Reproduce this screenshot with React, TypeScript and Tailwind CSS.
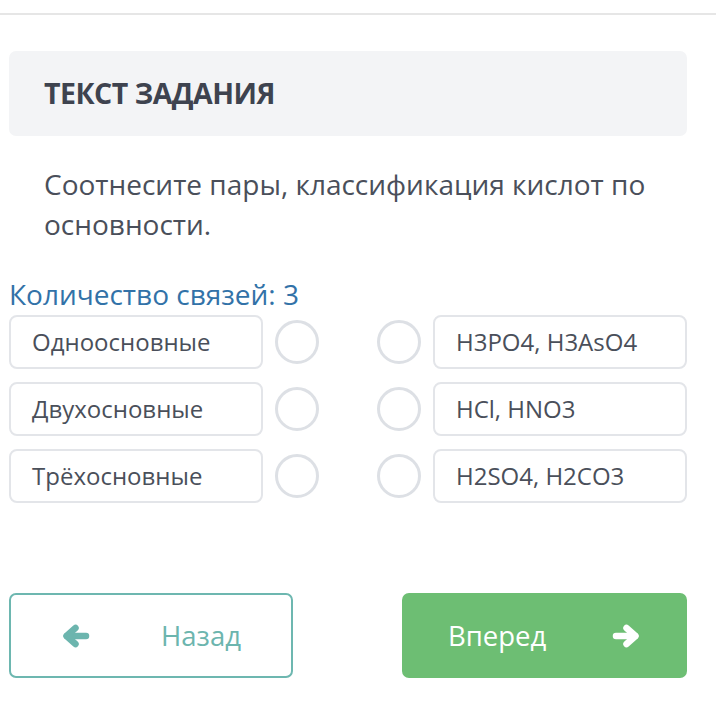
const rows = [
    { left: "Одноосновные", right: "H3PO4, H3AsO4" },
    { left: "Двухосновные", right: "HCl, HNO3" },
    { left: "Трёхосновные", right: "H2SO4, H2CO3" },
];

const Circle = () => (
    <div className="w-[44px] h-[44px] rounded-full border-[3px] border-[#dde0e5] shrink-0" />
);

// chunky arrow, pointing right; flipped for the back button
const Arrow = ({ flip }: { flip?: boolean }) => (
    <svg
        width="28"
        height="24"
        viewBox="0 0 28 24"
        className={flip ? "-scale-x-100" : ""}
        fill="none"
        stroke="currentColor"
        strokeWidth="6.5"
        strokeLinecap="round"
        strokeLinejoin="round"
    >
        <path d="M4 12 H23" />
        <path d="M14.5 4 L23.5 12 L14.5 20" />
    </svg>
);

const App = () => {
    return (
        <div className="w-full min-h-[716px] bg-white font-['Open_Sans',sans-serif]">
            <div className="h-[13px]" />
            <div className="h-[2px] bg-[#e6e6e6]" />

            <div className="ml-[9px] w-[678px] pt-[36px]">
                <div className="h-[85px] rounded-[7px] bg-[#f3f4f6] flex items-center px-[35px]">
                    <h1 className="text-[28.5px] font-bold text-[#3e434f] tracking-[-0.5px]">ТЕКСТ ЗАДАНИЯ</h1>
                </div>

                <p className="mt-[28px] px-[35px] text-[28px] leading-[40px] text-[#4a4f5a]">
                    Соотнесите пары, классификация кислот по основности.
                </p>

                <div className="mt-[33px] text-[28px] leading-[34px] text-[#3272a8]">
                    Количество связей: 3
                </div>

                <div className="mt-[4px] flex flex-col gap-[13px]">
                    {rows.map((row) => (
                        <div key={row.left} className="flex items-center justify-between">
                            <div className="flex items-center gap-[12px]">
                                <div className="w-[254px] h-[54px] rounded-[8px] border-2 border-[#e3e5e9] flex items-center px-[21px] text-[24px] text-[#4a4f5a]">
                                    {row.left}
                                </div>
                                <Circle />
                            </div>
                            <div className="flex items-center gap-[12px]">
                                <Circle />
                                <div className="w-[254px] h-[54px] rounded-[8px] border-2 border-[#e3e5e9] flex items-center px-[21px] text-[24px] text-[#4a4f5a]">
                                    {row.right}
                                </div>
                            </div>
                        </div>
                    ))}
                </div>

                <div className="mt-[90px] flex justify-between">
                    <button className="w-[284px] h-[85px] rounded-[7px] border-2 border-[#6db7b0] flex items-center justify-between pl-[51px] pr-[50px] text-[27.5px] text-[#6cb5ae]">
                        <Arrow flip />
                        <span>Назад</span>
                    </button>
                    <button className="w-[285px] h-[85px] rounded-[7px] bg-[#6dbe73] flex items-center justify-between pl-[46px] pr-[47px] text-[27.5px] text-white">
                        <span>Вперед</span>
                        <Arrow />
                    </button>
                </div>
            </div>
        </div>
    );
};

export default App;
